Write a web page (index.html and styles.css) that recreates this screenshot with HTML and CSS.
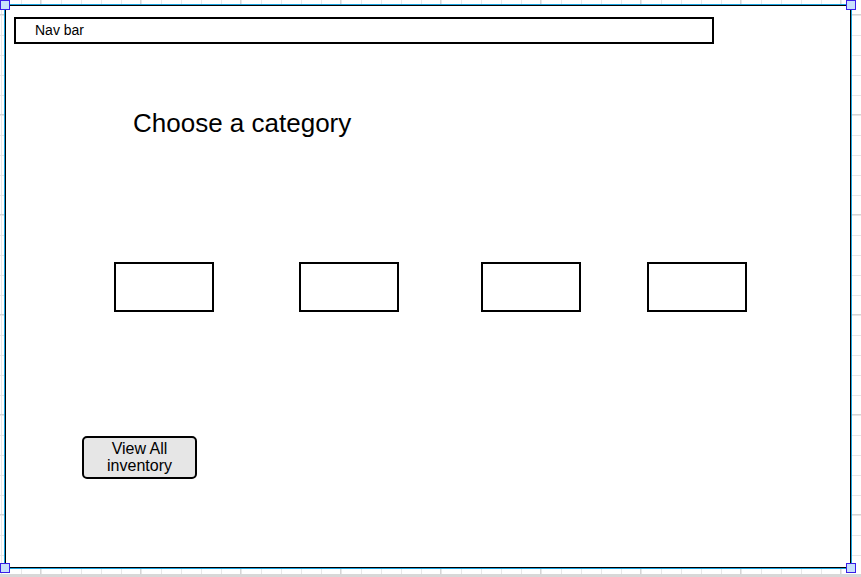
FILE: index.html
```html
<!DOCTYPE html>
<html lang="en">
<head>
    <meta charset="UTF-8">
    <meta name="viewport" content="width=device-width, initial-scale=1.0">
    <title>Wireframe - Choose a category</title>
    <link rel="stylesheet" href="styles.css">
</head>
<body>
    <div class="frame">
        <div class="canvas">
            <div class="nav-bar">Nav bar</div>

            <h1 class="page-title">Choose a category</h1>

            <div class="category-row">
                <div class="category-box"></div>
                <div class="category-box"></div>
                <div class="category-box"></div>
                <div class="category-box"></div>
            </div>

            <button class="view-all-btn">View All<br>inventory</button>
        </div>

        <span class="handle handle-tl"></span>
        <span class="handle handle-tr"></span>
        <span class="handle handle-bl"></span>
        <span class="handle handle-br"></span>
    </div>
</body>
</html>
```

FILE: styles.css
```css
html,
body {
    margin: 0;
    height: 100%;
}

body {
    font-family: 'Liberation Sans', Arial, sans-serif;
    color: #000;
    background-color: #fff;
    background-image:
        linear-gradient(to bottom, transparent 574px, #d8d8d8 574px),
        linear-gradient(to bottom, #d6d6d6 1px, transparent 1px),
        linear-gradient(to right, #d6d6d6 1px, transparent 1px),
        linear-gradient(to bottom, #e8e8e8 1px, transparent 1px),
        linear-gradient(to right, #e8e8e8 1px, transparent 1px);
    background-size:
        100% 100%,
        100% 100px,
        100px 100%,
        100% 20px,
        20px 100%;
    background-position:
        0 0,
        0 14px,
        40px 0,
        0 15px,
        1px 0;
    overflow: hidden;
}

/* selected frame */
.frame {
    position: relative;
    box-sizing: border-box;
    width: 848px;
    height: 565px;
    margin: 4px 0 0 4px;
    border: 1px solid #1ba4e0;
    background: #fff;
}

.canvas {
    box-sizing: border-box;
    height: 100%;
    border: 1px solid #000;
    overflow: hidden;
}

.handle {
    position: absolute;
    box-sizing: border-box;
    width: 10px;
    height: 10px;
    background: #c8e0fb;
    border: 1px solid #3a1ee8;
}

.handle-tl { left: -5px; top: -5px; }
.handle-tr { right: -5px; top: -5px; }
.handle-bl { left: -5px; bottom: -5px; }
.handle-br { right: -5px; bottom: -5px; }

/* nav bar */
.nav-bar {
    box-sizing: border-box;
    width: 700px;
    height: 27px;
    margin: 11px 0 0 8px;
    padding-left: 19px;
    border: 2px solid #000;
    font-size: 14px;
    line-height: 23px;
}

/* heading */
.page-title {
    margin: 64px 0 0 127px;
    font-size: 26px;
    font-weight: normal;
    line-height: 30px;
}

/* category boxes */
.category-row {
    display: flex;
    margin-top: 124px;
    padding-left: 108px;
}

.category-box {
    box-sizing: border-box;
    width: 100px;
    height: 50px;
    border: 2px solid #000;
}

.category-box:nth-child(2) { margin-left: 85px; }
.category-box:nth-child(3) { margin-left: 82px; }
.category-box:nth-child(4) { margin-left: 66px; }

/* button */
.view-all-btn {
    display: block;
    box-sizing: border-box;
    width: 115px;
    height: 43px;
    margin: 124px 0 0 76px;
    padding: 0 0 2px;
    border: 2px solid #000;
    border-radius: 5px;
    background: #e6e6e6;
    font-family: 'Liberation Sans', Arial, sans-serif;
    font-size: 16px;
    line-height: 17px;
    color: #000;
    text-align: center;
}
```
